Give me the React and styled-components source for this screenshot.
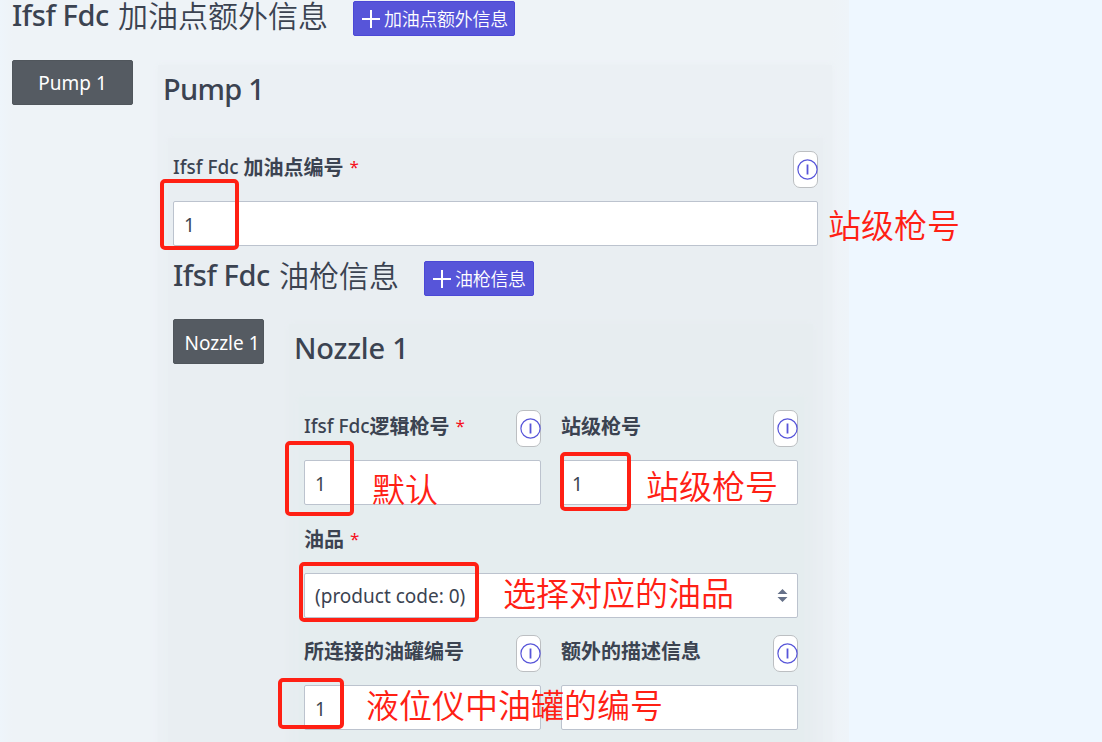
import React from "react";
import styled, { createGlobalStyle } from "styled-components";

const Global = createGlobalStyle`
  * { box-sizing: border-box; }
  html, body { margin: 0; height: 742px; overflow: hidden; background: #eef7ff; }
  body { font-family: "Noto Sans", "Noto Sans CJK SC", sans-serif; color: #3b4351; }
`;

const Screen = styled.div`
  position: relative;
  width: 1102px;
  height: 742px;
  overflow: hidden;
`;
const Page = styled.main`
  width: 849px;
  height: 742px;
  padding-left: 12px;
  background: linear-gradient(90deg, #eef5fb 0, #eef3f7 12px, #eef3f7 832px, #eef4f9 849px);
`;
const Latin = styled.span`
  letter-spacing: ${(p) => p.$ls || 0}px;
  white-space: pre;
`;
const Cjk = styled.span`
  font-family: "Noto Sans CJK SC", sans-serif;
  white-space: pre;
`;
const HeadingRow = styled.div`
  display: flex;
  align-items: flex-start;
  height: ${(p) => p.$height}px;
  padding-top: ${(p) => p.$top}px;
`;
const Heading = styled.h2`
  display: flex;
  align-items: flex-start;
  width: ${(p) => p.$width}px;
  margin: 0;
  font-size: 29px;
  font-weight: 500;
  line-height: 28px;
  white-space: nowrap;
  ${Cjk} { margin-top: -1px; font-size: 30px; font-weight: 350; }
  ${Latin} { width: 106px; }
`;
const AddButton = styled.button`
  display: flex;
  align-items: center;
  width: ${(p) => p.$width}px;
  height: 35px;
  padding: 0 0 0 8px;
  gap: 4px;
  border: 1px solid #4b48d6;
  border-radius: 2px;
  background: #5755d9;
  color: #fff;
  font-size: 18px;
  white-space: nowrap;
  ${Cjk} { margin-top: -2px; letter-spacing: -0.3px; font-weight: 350; line-height: 30px; }
`;
const Split = styled.div`
  display: flex;
  align-items: flex-start;
`;
const Tab = styled.button`
  width: ${(p) => p.$width}px;
  height: 45px;
  flex: none;
  padding: ${(p) => p.$pad};
  border: 1px solid #50565c;
  border-radius: 2px;
  background: #555b62;
  color: #fff;
  font: 19px "Noto Sans", sans-serif;
  white-space: nowrap;
`;
const Panel = styled.section`
  width: ${(p) => p.$width}px;
  height: 700px;
  margin: 5px 0 0 25px;
  background: ${(p) => p.$bg};
  box-shadow: 0 0 6px ${(p) => p.$bg};
`;
const Title = styled.h3`
  height: 73px;
  margin: 0;
  padding: 4px 0 0 5px;
  font-size: 29px;
  line-height: 40px;
  font-weight: 500;
`;
const Box = styled.div`
  width: ${(p) => p.$width}px;
  height: 640px;
  margin-left: 10px;
  padding: 13px 5px 0;
  background: ${(p) => p.$bg};
  box-shadow: 0 0 6px ${(p) => p.$bg};
`;
const LabelRow = styled.div`
  display: flex;
  justify-content: space-between;
  height: 50px;
`;
const Label = styled.label`
  display: flex;
  height: 32px;
  font-size: 19px;
  line-height: 32px;
  font-weight: 500;
  white-space: nowrap;
  ${Cjk} { font-size: 20px; font-weight: 700; }
`;
const Star = styled.span`
  margin-left: 6px;
  color: #f5101c;
  font-size: 17px;
  font-weight: 400;
`;
const HelpButton = styled.button`
  display: flex;
  align-items: center;
  justify-content: flex-end;
  width: 25px;
  height: 37px;
  padding: 0;
  border: 1px solid #bcbfc2;
  border-radius: 7px;
  background: #fff;
  svg { flex: none; margin-right: -0.5px; }
`;
const Input = styled.div`
  display: flex;
  align-items: center;
  justify-content: space-between;
  height: 45px;
  padding: 2px 9px 0 10px;
  border: 1px solid #bcc3ce;
  border-radius: 2px;
  background: #fff;
  font-size: 19px;
  line-height: 26px;
`;
const Columns = styled.div`
  display: grid;
  grid-template-columns: 237px 237px;
  column-gap: 20px;
`;
const ProductRow = styled(LabelRow)`
  height: 68px;
  padding-top: 18px;
`;
const Select = styled(Input)`
  width: 494px;
  padding-top: 0;
`;
const Lower = styled(Columns)`
  margin-top: 17px;
`;
const Frame = styled.div`
  position: absolute;
  left: ${(p) => p.$x}px;
  top: ${(p) => p.$y}px;
  width: ${(p) => p.$w}px;
  height: ${(p) => p.$h}px;
  border: 4px solid #ff2014;
  border-radius: 5px;
`;
const Note = styled.div`
  position: absolute;
  left: ${(p) => p.$x}px;
  top: ${(p) => p.$y}px;
  color: #ff2014;
  font: 350 33px/40px "Noto Sans CJK SC", sans-serif;
  white-space: nowrap;
`;

const Plus = () => (
  <svg width="18" height="18" viewBox="0 0 18 18" fill="none" stroke="#fff" strokeWidth="2">
    <path d="M9 0v18M0 9h18" />
  </svg>
);
const Help = () => (
  <HelpButton aria-label="info">
    <svg width="21" height="21" viewBox="0 0 21 21" fill="none" stroke="#5755d9">
      <circle cx="10.5" cy="10.5" r="9.6" strokeWidth="1.2" />
      <path d="M10.5 5.5v10" strokeWidth="1.8" />
    </svg>
  </HelpButton>
);
const Arrows = () => (
  <svg width="11" height="13" viewBox="0 0 11 13" fill="#667189">
    <path d="M.5 5 5.5 0l5 5zM.5 8l5 5 5-5z" />
  </svg>
);

const Field = ({ latin, cjk, required, help, value }) => (
  <div>
    <LabelRow>
      <Label>
        {latin && <Latin>{latin}</Latin>}
        <Cjk>{cjk}</Cjk>
        {required && <Star>*</Star>}
      </Label>
      {help && <Help />}
    </LabelRow>
    <Input>{value}</Input>
  </div>
);

const frames = [
  [160, 179, 79, 71],
  [285, 441, 69, 75],
  [560, 452, 71, 59],
  [299, 562, 180, 60],
  [278, 678, 66, 51],
];
const notes = [
  [828, 204, "站级枪号"],
  [372, 468, "默认"],
  [646, 465, "站级枪号"],
  [503, 572, "选择对应的油品"],
  [366, 684, "液位仪中油罐的编号"],
];

export default function App() {
  return (
    <Screen>
      <Global />
      <Page>
        <HeadingRow $height={60} $top={1}>
          <Heading $width={341}><Latin $ls={-0.4}>Ifsf Fdc</Latin><Cjk>加油点额外信息</Cjk></Heading>
          <AddButton $width={162}><Plus /><Cjk>加油点额外信息</Cjk></AddButton>
        </HeadingRow>
        <Split>
          <Tab $width={121} $pad="0">Pump 1</Tab>
          <Panel $width={674} $bg="#ebf0f4">
            <Title><Latin $ls={-0.7}>Pump 1</Latin></Title>
            <Box $width={655} $bg="#e9eef2">
              <Field latin="Ifsf Fdc " cjk="加油点编号" required help value="1" />
              <HeadingRow $height={73} $top={15}>
                <Heading $width={251}><Latin $ls={-0.4}>Ifsf Fdc</Latin><Cjk>油枪信息</Cjk></Heading>
                <AddButton $width={110}><Plus /><Cjk>油枪信息</Cjk></AddButton>
              </HeadingRow>
              <Split>
                <Tab $width={91} $pad="2px 0 0 7px">Nozzle 1</Tab>
                <Panel $width={524} $bg="#e7edf0">
                  <Title><Latin $ls={-0.2}>Nozzle 1</Latin></Title>
                  <Box $width={505} $bg="#e5edef">
                    <Columns>
                      <Field latin="Ifsf Fdc" cjk="逻辑枪号" required help value="1" />
                      <Field cjk="站级枪号" help value="1" />
                    </Columns>
                    <ProductRow>
                      <Label><Cjk>油品</Cjk><Star>*</Star></Label>
                    </ProductRow>
                    <Select><span>(product code: 0)</span><Arrows /></Select>
                    <Lower>
                      <Field cjk="所连接的油罐编号" help value="1" />
                      <Field cjk="额外的描述信息" help value="" />
                    </Lower>
                  </Box>
                </Panel>
              </Split>
            </Box>
          </Panel>
        </Split>
      </Page>
      {frames.map(([x, y, w, h]) => <Frame key={y} $x={x} $y={y} $w={w} $h={h} />)}
      {notes.map(([x, y, text]) => <Note key={y} $x={x} $y={y}>{text}</Note>)}
    </Screen>
  );
}
